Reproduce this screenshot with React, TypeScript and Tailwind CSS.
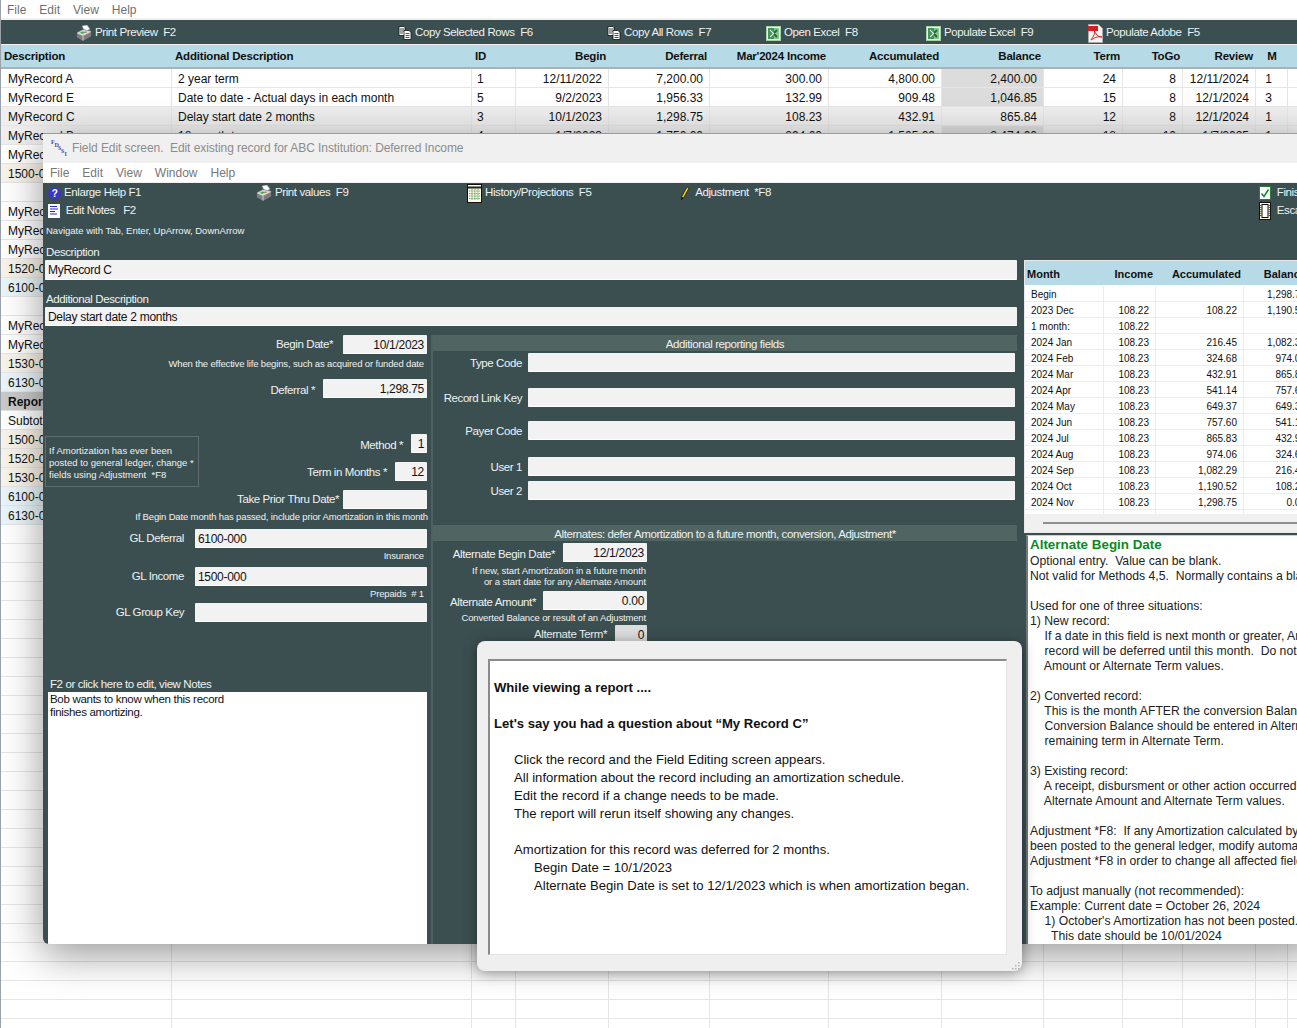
import type { ReactNode } from "react";

const sans = "[font-family:'Liberation_Sans',sans-serif]";

// column widths of the report grid behind the edit window
const colWidths = [
  "w-[171px]",
  "w-[300px]",
  "w-[44px]",
  "w-[93px]",
  "w-[101px]",
  "w-[119px]",
  "w-[113px]",
  "w-[102px]",
  "w-[79px]",
  "w-[60px]",
  "w-[73px]",
  "w-[32px]",
  "w-[10px]",
];

const headers = ["Description", "Additional Description", "ID", "Begin", "Deferral", "Mar'2024 Income", "Accumulated", "Balance", "Term", "ToGo", "Review", "M", ""];
const aligns = ["text-left", "text-left", "text-left", "text-right", "text-right", "text-right", "text-right", "text-right", "text-right", "text-right", "text-right", "text-center", "text-left"];

type Row = { cells: string[]; bg?: string; bold?: boolean; shadeBalance?: boolean };

const rows: Row[] = [
  { cells: ["MyRecord A", "2 year term", "1", "12/11/2022", "7,200.00", "300.00", "4,800.00", "2,400.00", "24", "8", "12/11/2024", "1"], shadeBalance: true },
  { cells: ["MyRecord E", "Date to date - Actual days in each month", "5", "9/2/2023", "1,956.33", "132.99", "909.48", "1,046.85", "15", "8", "12/1/2024", "3"], shadeBalance: true },
  { cells: ["MyRecord C", "Delay start date 2 months", "3", "10/1/2023", "1,298.75", "108.23", "432.91", "865.84", "12", "8", "12/1/2024", "1"], bg: "bg-[#efefef]" },
  { cells: ["MyRecord B", "18 month term", "4", "1/7/2023", "1,750.00", "294.00", "1,505.00", "2,474.00", "18", "10", "1/7/2025", "1"], bg: "bg-[#efefef]", shadeBalance: true },
  { cells: ["MyRecord D"] },
  { cells: ["1500-000"], bg: "bg-[#f8f3e8]" },
  { cells: [""] },
  { cells: ["MyRecord F"] },
  { cells: ["MyRecord G"] },
  { cells: ["MyRecord H"] },
  { cells: ["1520-000"], bg: "bg-[#f8f3e8]" },
  { cells: ["6100-000"], bg: "bg-[#e9f5f8]" },
  { cells: [""] },
  { cells: ["MyRecord J"] },
  { cells: ["MyRecord K"] },
  { cells: ["1530-000"], bg: "bg-[#f8f3e8]" },
  { cells: ["6130-000"], bg: "bg-[#e9f5f8]" },
  { cells: ["Report Total"], bg: "bg-[#c9c9c9]", bold: true },
  { cells: ["Subtotal"] },
  { cells: ["1500-000"], bg: "bg-[#f8f3e8]" },
  { cells: ["1520-000"], bg: "bg-[#f8f3e8]" },
  { cells: ["1530-000"], bg: "bg-[#f8f3e8]" },
  { cells: ["6100-000"], bg: "bg-[#e9f5f8]" },
  { cells: ["6130-000"], bg: "bg-[#e9f5f8]" },
  ...Array.from({ length: 27 }, () => ({ cells: [""] })),
];

const schedule = [
  ["Begin", "", "", "1,298.75"],
  ["2023 Dec", "108.22", "108.22", "1,190.53"],
  ["1 month:", "108.22", "", ""],
  ["2024 Jan", "108.23", "216.45", "1,082.30"],
  ["2024 Feb", "108.23", "324.68", "974.07"],
  ["2024 Mar", "108.23", "432.91", "865.84"],
  ["2024 Apr", "108.23", "541.14", "757.61"],
  ["2024 May", "108.23", "649.37", "649.38"],
  ["2024 Jun", "108.23", "757.60", "541.15"],
  ["2024 Jul", "108.23", "865.83", "432.92"],
  ["2024 Aug", "108.23", "974.06", "324.69"],
  ["2024 Sep", "108.23", "1,082.29", "216.46"],
  ["2024 Oct", "108.23", "1,190.52", "108.23"],
  ["2024 Nov", "108.23", "1,298.75", "0.00"],
  ["", "", "", ""],
];

const helpLines = [
  "Optional entry.  Value can be blank.",
  "Not valid for Methods 4,5.  Normally contains a blank value.",
  "",
  "Used for one of three situations:",
  "1) New record:",
  "    If a date in this field is next month or greater, Amortization for this",
  "    record will be deferred until this month.  Do not enter Alternate",
  "    Amount or Alternate Term values.",
  "",
  "2) Converted record:",
  "    This is the month AFTER the conversion Balance date.",
  "    Conversion Balance should be entered in Alternate Amount and",
  "    remaining term in Alternate Term.",
  "",
  "3) Existing record:",
  "    A receipt, disbursment or other action occurred.  Enter new",
  "    Alternate Amount and Alternate Term values.",
  "",
  "Adjustment *F8:  If any Amortization calculated by this record has",
  "been posted to the general ledger, modify automatically using",
  "Adjustment *F8 in order to change all affected fields.",
  "",
  "To adjust manually (not recommended):",
  "Example: Current date = October 26, 2024",
  "    1) October's Amortization has not been posted.",
  "      This date should be 10/01/2024",
];

function PrinterIcon() {
  return (
    <svg width="16" height="16" viewBox="0 0 16 16" className="shrink-0">
      <path d="M6 1 11 0 14 4 9 7z" fill="#fff" stroke="#999" strokeWidth=".5" />
      <path d="M1 7.500 7 4.500 15 6 15 11 7 15.500 1 12z" fill="#d6d6d6" stroke="#666" strokeWidth=".5" />
      <path d="M1 8.500 7 11 15 7 15 11 7 15.500 1 12z" fill="#7d7d7d" />
      <path d="M4 7.500 7 6.500 9 7.500 6 9z" fill="#3bb54a" />
      <path d="M8 7 10 6.500 11 7.200 9 7.800z" fill="#d93a3a" />
      <path d="M7 11V15.500" stroke="#eee" strokeWidth=".7" />
    </svg>
  );
}

function CopyIcon() {
  return (
    <svg width="14" height="14" viewBox="0 0 14 14" className="shrink-0">
      <path d="M1 .5h5l1 1v8H1z" fill="#fff" stroke="#111" strokeWidth=".8" />
      <path d="M2 3h4M2 5h4M2 7h3" stroke="#111" strokeWidth=".8" />
      <path d="M6 4.500h5l2 2v7H6z" fill="#fff" stroke="#111" strokeWidth=".8" />
      <path d="M7.500 7.500h4M7.500 9.500h4M7.500 11.500h4" stroke="#223" strokeWidth=".8" />
    </svg>
  );
}

function ExcelIcon() {
  return (
    <svg width="15" height="15" viewBox="0 0 15 15" className="shrink-0">
      <rect x=".5" y=".5" width="14" height="14" fill="#eaf5ea" stroke="#a8d0a8" />
      <rect x="2" y="2" width="11" height="11" fill="#86c48f" />
      <rect x="2" y="2" width="6" height="11" fill="#3d9a55" />
      <path d="M4 4 11 11M11 4 4 11" stroke="#1f6f36" strokeWidth="2" />
      <path d="M4 4 8 8M8 7 4 11" stroke="#e6f6e6" strokeWidth="1.200" />
    </svg>
  );
}

function PdfIcon() {
  return (
    <svg width="15" height="19" viewBox="0 0 15 19" className="shrink-0">
      <path d="M.5.500h10l4 4v14H.500z" fill="#f5f5f5" stroke="#aaa" />
      <rect x="0" y="2" width="10" height="5" fill="#d81e1e" />
      <path d="M3 16C6 12 7 9 6.500 7 9 12 11 13 14 13 10 12 6 14 3 16z" fill="none" stroke="#d81e1e" strokeWidth="1" />
    </svg>
  );
}

function HelpIcon() {
  return (
    <svg width="13" height="13" viewBox="0 0 13 13" className="shrink-0">
      <circle cx="6.500" cy="6.500" r="6.500" fill="#3b35c4" />
      <text x="6.500" y="10" textAnchor="middle" fontSize="10" fontWeight="700" fill="#fff" fontFamily="Liberation Sans">?</text>
    </svg>
  );
}

function NotesIcon() {
  return (
    <svg width="12" height="14" viewBox="0 0 12 14" className="shrink-0">
      <rect width="12" height="14" fill="#fff" />
      <path d="M2 2.500h7M2 5h8M2 7.500h5M2 10h7" stroke="#1d2fd0" strokeWidth="1.200" />
    </svg>
  );
}

function GridIcon() {
  return (
    <svg width="15" height="19" viewBox="0 0 15 19" className="shrink-0">
      <rect x=".5" y=".5" width="14" height="18" fill="#fdf9e2" stroke="#111" />
      <path d="M1 3.500h13" stroke="#222" strokeWidth="2" />
      <path d="M2 7h11M2 9.500h11M2 12h11M2 14.500h11M5 5v11M8 5v11M11 5v11" stroke="#3c8a4c" strokeWidth=".8" strokeDasharray="1 .7" />
    </svg>
  );
}

function PencilIcon() {
  return (
    <svg width="10" height="15" viewBox="0 0 10 15" className="shrink-0">
      <path d="M7 1 9 2 3.500 12 1.500 11z" fill="#f2d321" stroke="#111" strokeWidth=".7" />
      <path d="M1.500 11 3.500 12 1 14.500z" fill="#111" />
    </svg>
  );
}

function CheckIcon() {
  return (
    <svg width="12" height="14" viewBox="0 0 12 14" className="shrink-0">
      <rect x=".5" y=".5" width="11" height="13" fill="#fff" stroke="#2b7a3a" />
      <path d="M2.500 7.500 5 10.500 9.500 3.500" fill="none" stroke="#0c8a2a" strokeWidth="1.500" />
    </svg>
  );
}

function DoorIcon() {
  return (
    <svg width="12" height="18" viewBox="0 0 12 18" className="shrink-0">
      <rect x=".5" y=".5" width="11" height="17" fill="#fbf3d0" stroke="#111" />
      <rect x="3" y="2.500" width="6" height="13" fill="#fff" stroke="#111" />
      <path d="M1.800 3v12M10.200 3v12" stroke="#111" strokeWidth=".9" strokeDasharray="1 1" />
    </svg>
  );
}

function LogoIcon() {
  return (
    <svg width="18" height="20" viewBox="0 0 18 20" className="shrink-0" fontFamily="Liberation Serif" fontWeight="700" fontSize="6" fill="#4b45b8">
      <text x="0" y="6">F</text>
      <text x="3.500" y="9">D</text>
      <text x="7" y="12">S</text>
      <text x="10" y="15">S</text>
      <text x="13.500" y="18">I</text>
    </svg>
  );
}

function ToolItem({ icon, label, className }: { icon: ReactNode; label: string; className: string }) {
  return (
    <div className={`flex items-center whitespace-pre ${className}`}>
      {icon}
      <span className="ml-[3px]">{label}</span>
    </div>
  );
}

function Box({ value, className, gray }: { value?: string; className: string; gray?: boolean }) {
  return (
    <div className={`h-[19px] shrink-0 overflow-hidden rounded-[1px] border-b border-b-white pl-[3px] pr-[3px] leading-[20px] text-[12px] tracking-[-0.3px] text-[#111] ${gray ? "bg-[#dcdcdc]" : "bg-[#f2f2f2]"} ${className}`}>
      {value}
    </div>
  );
}

function Band({ children }: { children: ReactNode }) {
  return <div className="h-[16px] bg-[#506462] text-center leading-[18px]">{children}</div>;
}

function Hint({ children, className }: { children: ReactNode; className: string }) {
  return <div className={`h-[12px] whitespace-pre text-right text-[9.5px] leading-[12px] tracking-[-0.15px] ${className}`}>{children}</div>;
}

function LeftField({ label, value, boxW, gap, className }: { label: string; value?: string; boxW: string; gap: string; className: string }) {
  return (
    <div className={`flex items-center justify-end whitespace-pre ${className}`}>
      <span className={`leading-[13px] ${gap}`}>{label}</span>
      <Box value={value} className={`text-right ${boxW}`} />
    </div>
  );
}

function ReportField({ label, className }: { label: string; className: string }) {
  return (
    <div className={`flex items-center justify-end pr-[2px] ${className}`}>
      <span className="mr-[6px] pt-[2px] leading-[13px]">{label}</span>
      <Box className="w-[487px]" />
    </div>
  );
}

export default function App() {
  return (
    <div className={`relative h-[1028px] w-[1297px] overflow-hidden bg-white ${sans}`}>
      {/* report window */}
      <div className="flex h-full flex-col overflow-hidden border-l border-l-[#9aa1a8]">
        <div className="flex h-[18px] shrink-0 items-center gap-[13px] pl-[6px] pt-[2px] text-[12px] text-[#6f6f6f]">
          <span>File</span>
          <span>Edit</span>
          <span>View</span>
          <span>Help</span>
        </div>
        <div className="h-[2px] shrink-0 bg-[#f0f0f0]" />
        <div className="-ml-px flex h-[24px] shrink-0 items-center bg-[#3c4f50] pt-[2px] text-[11.5px] tracking-[-0.4px] text-[#eef2f2]">
          <ToolItem icon={<PrinterIcon />} label="Print Preview  F2" className="ml-[76px] w-[322px]" />
          <ToolItem icon={<CopyIcon />} label="Copy Selected Rows  F6" className="w-[209px]" />
          <ToolItem icon={<CopyIcon />} label="Copy All Rows  F7" className="w-[159px]" />
          <ToolItem icon={<ExcelIcon />} label="Open Excel  F8" className="w-[160px]" />
          <ToolItem icon={<ExcelIcon />} label="Populate Excel  F9" className="w-[162px]" />
          <ToolItem icon={<PdfIcon />} label="Populate Adobe  F5" className="" />
        </div>
        <div className="h-px shrink-0 bg-[#f0f0f0]" />
        <div className="flex h-[24px] shrink-0 items-center border-b-2 border-b-[#a9b3b6] bg-[#b6dbe6] pt-[2px] text-[11.5px] font-bold tracking-[-0.2px] text-[#111]">
          {headers.map((h, i) => (
            <div key={i} className={`shrink-0 px-[3px] ${colWidths[i]} ${aligns[i]}`}>
              {h}
            </div>
          ))}
        </div>
        {rows.map((row, r) => (
          <div key={r} className={`flex h-[19px] shrink-0 border-b border-b-[#e6e6e6] text-[12px] leading-[21px] text-[#111] ${row.bg ?? ""} ${row.bold ? "font-bold" : ""}`}>
            {colWidths.map((w, i) => (
              <div
                key={i}
                className={`shrink-0 overflow-hidden whitespace-nowrap border-r border-r-[#e6e6e6] ${i === 0 ? "pl-[7px]" : i === 1 ? "pl-[6px]" : i === 2 ? "pl-[5px]" : "pr-[6px]"} ${w} ${aligns[i]} ${i === 7 && row.shadeBalance ? "bg-[#dcdcdc]" : ""}`}
              >
                {row.cells[i] ?? ""}
              </div>
            ))}
          </div>
        ))}
      </div>

      {/* field edit window */}
      <div className="absolute left-[43px] top-[133px] flex h-[811px] w-[1275px] flex-col overflow-hidden rounded-bl-[6px] border-t border-t-[#9c9c9c] bg-[#3c4f50] text-[11.5px] tracking-[-0.4px] text-[#eef2f2] shadow-[0_10px_42px_rgba(0,0,0,0.42)]">
        <div className="flex h-[29px] shrink-0 items-center bg-[#f0f0f0] pb-[2px] pl-[8px] text-[12px] tracking-[-0.07px] text-[#8c8c8c]">
          <LogoIcon />
          <span className="ml-[3px] whitespace-pre">Field Edit screen.  Edit existing record for ABC Institution: Deferred Income</span>
        </div>
        <div className="flex h-[19px] shrink-0 items-center gap-[13px] bg-white pl-[7px] text-[12px] tracking-normal text-[#777]">
          <span>File</span>
          <span>Edit</span>
          <span>View</span>
          <span>Window</span>
          <span>Help</span>
        </div>
        <div className="h-px shrink-0 bg-[#f0f0f0]" />

        <div className="mt-px flex h-[18px] shrink-0 items-center">
          <ToolItem icon={<HelpIcon />} label="Enlarge Help F1" className="ml-[5px] w-[208px]" />
          <ToolItem icon={<PrinterIcon />} label="Print values  F9" className="w-[211px]" />
          <ToolItem icon={<GridIcon />} label="History/Projections  F5" className="w-[213px]" />
          <ToolItem icon={<PencilIcon />} label=" Adjustment  *F8" className="w-[579px]" />
          <ToolItem icon={<CheckIcon />} label=" Finish" className="" />
        </div>
        <div className="flex h-[18px] shrink-0 items-center">
          <ToolItem icon={<NotesIcon />} label=" Edit Notes   F2" className="ml-[5px] w-[1211px]" />
          <ToolItem icon={<DoorIcon />} label=" Escape" className="" />
        </div>
        <div className="mt-[5px] h-[12px] shrink-0 pl-[3px] text-[9.5px] leading-[12px] tracking-normal">Navigate with Tab, Enter, UpArrow, DownArrow</div>

        <div className="mt-[6px] flex min-h-0 flex-1">
          <div className="ml-[2px] flex w-[972px] flex-col">
            <div className="mt-[3px] h-[12px] pl-px leading-[12px]">Description</div>
            <Box value="MyRecord C" className="mt-[2px] h-[20px] w-[972px] leading-[21px]" />
            <div className="mt-[13px] h-[12px] pl-px leading-[12px]">Additional Description</div>
            <Box value="Delay start date 2 months" className="mt-[2px] w-[972px]" />

            <div className="mt-[9px] flex min-h-0 flex-1">
              {/* dates, method and GL accounts */}
              <div className="flex w-[382px] shrink-0 flex-col">
                <LeftField label="Begin Date*" value="10/1/2023" boxW="w-[84px]" gap="mr-[10px]" className="" />
                <Hint className="mt-[4px] pr-[3px]">When the effective life begins, such as acquired or funded date</Hint>
                <LeftField label="Deferral *" value="1,298.75" boxW="w-[104px]" gap="mr-[8px] pt-[3px]" className="mt-[9px]" />
                <div className="mt-[36px] flex h-[53px] justify-between">
                  <div className="mt-[2px] h-[51px] w-[154px] whitespace-pre border border-[#5f6d6e] pl-[3px] pt-[8px] text-[9.5px] leading-[12px] tracking-normal">
                    <div>If Amortization has ever been</div>
                    <div>posted to general ledger, change *</div>
                    <div>fields using Adjustment  *F8</div>
                  </div>
                  <div className="flex flex-col">
                    <LeftField label="Method *" value="1" boxW="w-[16px]" gap="mr-[8px] pt-[3px]" className="" />
                    <LeftField label="Term in Months *" value="12" boxW="w-[32px]" gap="mr-[8px] pt-[2px]" className="mt-[9px]" />
                  </div>
                </div>
                <LeftField label="Take Prior Thru Date*" boxW="w-[84px]" gap="mr-[4px]" className="mt-[3px]" />
                <Hint className="-mr-px mt-[2px]">If Begin Date month has passed, include prior Amortization in this month</Hint>
                <div className="mt-[6px] flex items-center justify-end">
                  <span className="mr-[11px]">GL Deferral</span>
                  <Box value="6100-000" className="w-[232px]" />
                </div>
                <Hint className="mt-[2px] pr-[3px]">Insurance</Hint>
                <div className="mt-[5px] flex items-center justify-end">
                  <span className="mr-[11px]">GL Income</span>
                  <Box value="1500-000" className="w-[232px]" />
                </div>
                <Hint className="mt-[2px] pr-[3px]">Prepaids  # 1</Hint>
                <div className="mt-[3px] flex items-center justify-end">
                  <span className="mr-[11px]">GL Group Key</span>
                  <Box className="w-[232px]" />
                </div>
                <div className="mt-[56px] h-[12px] pl-[5px] leading-[12px]">F2 or click here to edit, view Notes</div>
                <div className="ml-[3px] mt-[2px] flex-1 bg-white pl-[2px] pt-px text-[11.5px] leading-[13px] tracking-[-0.3px] text-[#111]">
                  <div>Bob wants to know when this record</div>
                  <div>finishes amortizing.</div>
                </div>
              </div>

              {/* reporting fields and alternates */}
              <div className="ml-[4px] flex w-[586px] shrink-0 flex-col border-l-2 border-l-[#4e6160]">
                <Band>Additional reporting fields</Band>
                <ReportField label="Type Code" className="mt-[2px]" />
                <ReportField label="Record Link Key" className="mt-[16px]" />
                <ReportField label="Payer Code" className="mt-[14px]" />
                <ReportField label="User 1" className="mt-[17px]" />
                <ReportField label="User 2" className="mt-[5px]" />
                <div className="mt-[25px]">
                  <Band>Alternates: defer Amortization to a future month, conversion, Adjustment*</Band>
                </div>
                <div className="flex w-[214px] flex-col">
                  <LeftField label="Alternate Begin Date*" value="12/1/2023" boxW="w-[84px]" gap="mr-[8px] pt-[3px]" className="mt-[2px]" />
                  <div className="mt-[3px] whitespace-pre pr-px text-right text-[9.5px] leading-[11px] tracking-[-0.08px]">
                    <div>If new, start Amortization in a future month</div>
                    <div>or a start date for any Alternate Amount</div>
                  </div>
                  <LeftField label="Alternate Amount*" value="0.00" boxW="w-[104px]" gap="mr-[7px] pt-[3px]" className="mt-[4px]" />
                  <Hint className="mt-[2px] pr-px">Converted Balance or result of an Adjustment</Hint>
                  <div className="mt-px flex items-center justify-end">
                    <span className="mr-[8px] leading-[13px]">Alternate Term*</span>
                    <Box value="0" gray className="w-[32px] text-right" />
                  </div>
                </div>
              </div>
            </div>
          </div>

          {/* amortization schedule and field help */}
          <div className="ml-[7px] flex w-[290px] shrink-0 flex-col tracking-normal">
            <div className="mt-[17px] h-[273px] shrink-0 overflow-hidden border border-[#e8e8e8] bg-[#f0f0f0] text-[#111]">
              <div className="flex h-[25px] items-center border-b border-b-white bg-[#b6dbe6] pt-[2px] text-[11px] font-bold">
                <div className="w-[79px] shrink-0 pl-[2px]">Month</div>
                <div className="w-[52px] shrink-0 pr-[3px] text-right">Income</div>
                <div className="w-[88px] shrink-0 pr-[3px] text-right">Accumulated</div>
                <div className="w-[68px] shrink-0 pr-[6px] text-right">Balance</div>
              </div>
              <div className="h-[228px] overflow-hidden bg-white text-[10px] leading-[17px]">
                {schedule.map((s, i) => (
                  <div key={i} className="flex h-[16px] border-b border-b-[#ececec]">
                    <div className="w-[79px] shrink-0 border-r border-r-[#ececec] pl-[6px]">{s[0]}</div>
                    <div className="w-[52px] shrink-0 border-r border-r-[#ececec] pr-[6px] text-right">{s[1]}</div>
                    <div className="w-[88px] shrink-0 border-r border-r-[#ececec] pr-[6px] text-right">{s[2]}</div>
                    <div className="w-[68px] shrink-0 pr-[6px] text-right">{s[3]}</div>
                  </div>
                ))}
              </div>
              <div className="ml-[18px] mt-[8px] h-[2px] bg-[#8f8f8f]" />
            </div>
            <div className="ml-[2px] mt-[2px] flex-1 overflow-hidden whitespace-pre border-l-2 border-t border-l-[#6d7878] border-t-[#d0d0d0] bg-white pl-[2px] pt-[1px] text-[12.2px] leading-[15px] text-[#222]">
              <div className="mb-[1px] text-[13.4px] font-bold leading-[16px] text-[#0a8a1f]">Alternate Begin Date</div>
              {helpLines.map((line, i) => (
                <div key={i} className={`h-[15px] ${line.startsWith(" ") ? "pl-px" : ""}`}>
                  {line}
                </div>
              ))}
            </div>
          </div>
        </div>
      </div>

      {/* walkthrough note */}
      <div className="absolute left-[477px] top-[641px] h-[330px] w-[545px] rounded-[8px] bg-[#efefef] pl-[11px] pt-[18px] shadow-[0_2px_14px_rgba(0,0,0,0.4)]">
        <div className="h-[296px] w-[519px] border-2 border-b border-r border-b-[#e4e4e4] border-l-[#8a8a8a] border-r-[#e4e4e4] border-t-[#8a8a8a] bg-white pl-[4px] pt-[18px] text-[13.1px] leading-[18px] text-[#111]">
          <div className="font-bold">While viewing a report ....</div>
          <div className="mt-[18px] font-bold">Let's say you had a question about “My Record C”</div>
          <div className="mt-[18px] pl-[20px]">
            <div>Click the record and the Field Editing screen appears.</div>
            <div>All information about the record including an amortization schedule.</div>
            <div>Edit the record if a change needs to be made.</div>
            <div>The report will rerun itself showing any changes.</div>
            <div className="mt-[18px]">Amortization for this record was deferred for 2 months.</div>
            <div className="pl-[20px]">
              <div>Begin Date = 10/1/2023</div>
              <div>Alternate Begin Date is set to 12/1/2023 which is when amortization began.</div>
            </div>
          </div>
        </div>
        <svg width="9" height="9" viewBox="0 0 9 9" className="absolute bottom-[1px] right-[2px]">
          <path d="M7 1h1.500v1.500H7zM4 4h1.500v1.500H4zM7 4h1.500v1.500H7zM1 7h1.500v1.500H1zM4 7h1.500v1.500H4zM7 7h1.500v1.500H7z" fill="#b5b5b5" />
        </svg>
      </div>
    </div>
  );
}
